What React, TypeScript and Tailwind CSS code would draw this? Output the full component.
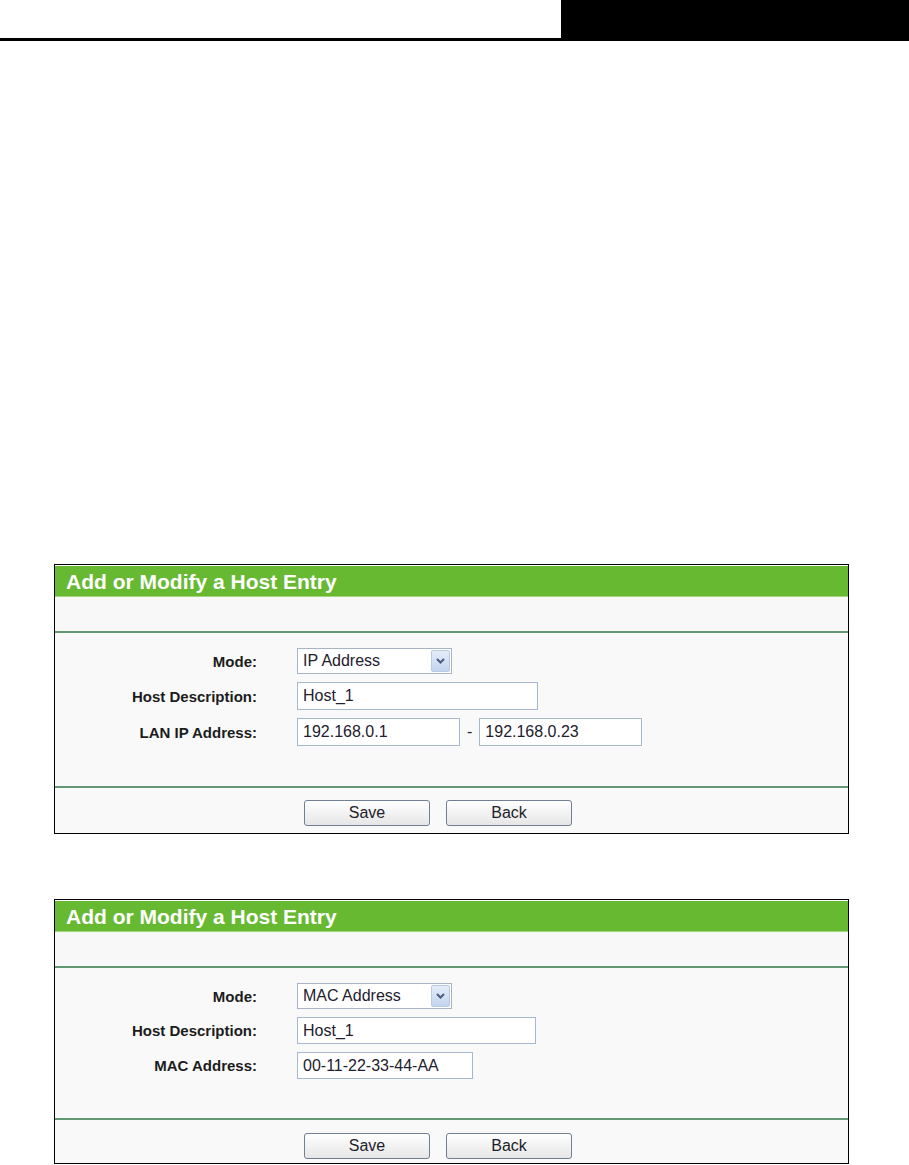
import React from 'react'

type Row = { label: string; field: React.ReactNode }

function SelectBox({ value }: { value: string }) {
  return (
    <div className="relative flex h-[26px] w-[155px] items-center border border-[#a7b4c4] bg-white">
      <span className="pl-[5px] text-[16px] leading-none text-[#23202e]">{value}</span>
      <div className="absolute right-[1px] top-[1px] bottom-[1px] flex w-[19px] items-center justify-center rounded-[2px] border border-[#b9cbe4] bg-gradient-to-b from-[#e4edf9] to-[#c3d4ee]">
        <svg width="9" height="6" viewBox="0 0 9 6">
          <polyline points="1,1 4.5,4.5 8,1" fill="none" stroke="#4a5d80" strokeWidth="2" />
        </svg>
      </div>
    </div>
  )
}

function TextBox({ value, width, height }: { value: string; width: string; height: string }) {
  return (
    <div className={`flex items-center border border-[#a5b8cf] bg-white ${width} ${height}`}>
      <span className="pl-[5px] text-[16px] leading-none text-[#23202e]">{value}</span>
    </div>
  )
}

function Panel({
  rows,
  formHeight,
  buttonsHeight,
  buttonsTop,
  inputHeight,
}: {
  rows: Row[]
  formHeight: string
  buttonsHeight: string
  buttonsTop: string
  inputHeight: string
}) {
  return (
    <div className="ml-[54px] w-[795px] border border-black bg-white">
      {/* Title */}
      <div className="mt-[1px] flex h-[31px] items-center border-b border-[#a3d57c] bg-[#67b932] pl-[11px]">
        <span className="text-[21px] font-bold leading-none text-white">Add or Modify a Host Entry</span>
      </div>
      <div className="h-[34px] bg-[#f8f8f8]" />
      <div className="h-[2px] bg-[#5f9873]" />

      {/* Form */}
      <div className={`flex flex-col gap-[8px] bg-[#f9f9f9] pt-[15px] ${formHeight}`}>
        {rows.map((row, i) => (
          <div key={row.label} className={`flex items-center ${i === 0 ? 'h-[26px]' : inputHeight}`}>
            <div className="w-[202px] text-right text-[15px] font-bold leading-none text-[#1c1c1c]">{row.label}</div>
            <div className="ml-[40px]">{row.field}</div>
          </div>
        ))}
      </div>

      <div className="h-[2px] bg-[#5f9873]" />
      <div className={`flex gap-[16px] bg-[#f9f9f9] pl-[249px] ${buttonsTop} ${buttonsHeight}`}>
        {['Save', 'Back'].map((b) => (
          <div
            key={b}
            className="flex h-[26px] w-[126px] items-center justify-center rounded-[3px] border border-[#707f94] bg-gradient-to-b from-white to-[#e6e6e6] text-[16px] leading-none text-[#1e1e2a]"
          >
            {b}
          </div>
        ))}
      </div>
    </div>
  )
}

export default function App() {
  return (
    <div className="h-[1165px] w-[909px] overflow-hidden bg-white font-['Liberation_Sans',Arial,sans-serif]">
      {/* Page header bar */}
      <div className="flex h-[38px]">
        <div className="flex-1" />
        <div className="w-[348px] bg-black" />
      </div>
      <div className="h-[3px] bg-black" />

      <div className="mt-[523px]">
        <Panel
          formHeight="h-[153px]"
          buttonsHeight="h-[45px]"
          buttonsTop="pt-[12px]"
          inputHeight="h-[28px]"
          rows={[
            { label: 'Mode:', field: <SelectBox value="IP Address" /> },
            { label: 'Host Description:', field: <TextBox value="Host_1" width="w-[241px]" height="h-[28px]" /> },
            {
              label: 'LAN IP Address:',
              field: (
                <div className="flex items-center">
                  <TextBox value="192.168.0.1" width="w-[163px]" height="h-[28px]" />
                  <span className="mx-[7px] text-[16px] leading-none text-[#23202e]">-</span>
                  <TextBox value="192.168.0.23" width="w-[163px]" height="h-[28px]" />
                </div>
              ),
            },
          ]}
        />
      </div>

      <div className="mt-[65px]">
        <Panel
          formHeight="h-[150px]"
          buttonsHeight="h-[43px]"
          buttonsTop="pt-[13px]"
          inputHeight="h-[27px]"
          rows={[
            { label: 'Mode:', field: <SelectBox value="MAC Address" /> },
            { label: 'Host Description:', field: <TextBox value="Host_1" width="w-[239px]" height="h-[27px]" /> },
            { label: 'MAC Address:', field: <TextBox value="00-11-22-33-44-AA" width="w-[176px]" height="h-[27px]" /> },
          ]}
        />
      </div>
    </div>
  )
}
